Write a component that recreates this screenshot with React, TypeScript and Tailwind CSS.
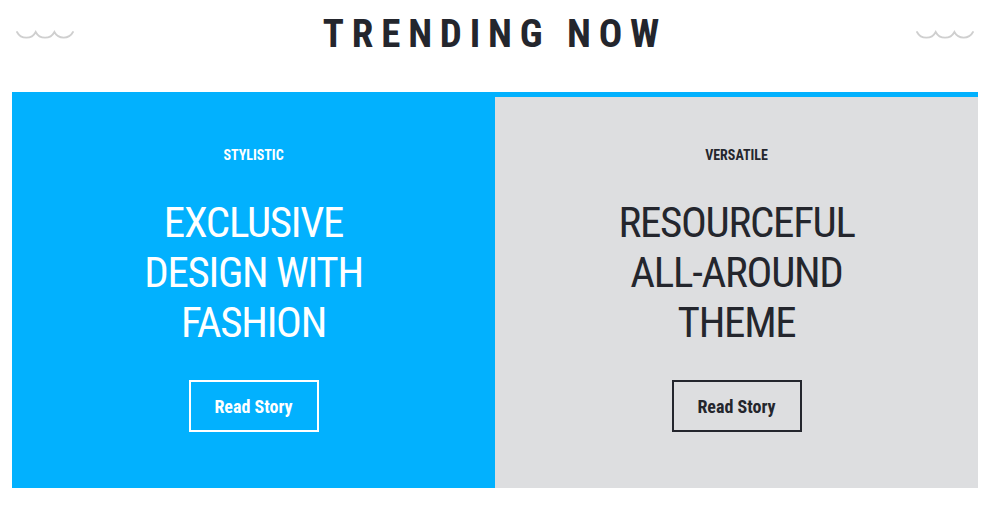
const Waves = () => (
  <svg width="58" height="12" viewBox="0 0 58 12" fill="none" className="shrink-0 mt-[3px]">
    <path
      d="M1 2 A10.5 10.5 0 0 0 19.7 2 A10.5 10.5 0 0 0 38.4 2 A10.5 10.5 0 0 0 57 2"
      stroke="#cfcfcf"
      strokeWidth="1.8"
      strokeLinecap="round"
    />
  </svg>
);

type Card = {
  label: string;
  lines: string[];
  dark: boolean;
};

const CARDS: Card[] = [
  { label: 'STYLISTIC', lines: ['EXCLUSIVE', 'DESIGN WITH', 'FASHION'], dark: false },
  { label: 'VERSATILE', lines: ['RESOURCEFUL', 'ALL-AROUND', 'THEME'], dark: true },
];

export default function App() {
  return (
    <div className="w-[993px] h-[514px] bg-white font-['Roboto_Condensed',Roboto,sans-serif]">
      <div className="flex items-center justify-between h-[68px] pl-4 pr-[19px]">
        <Waves />
        <h1 className="text-[39px] leading-none font-bold tracking-[0.2em] text-[#24262d]">
          TRENDING NOW
        </h1>
        <Waves />
      </div>

      <div className="ml-3 mt-6 w-[966px] bg-[#02b1fe] pt-[5px] grid grid-cols-2">
        {CARDS.map((c) => (
          <div
            key={c.label}
            className={`flex flex-col items-center pt-12 pb-14 ${
              c.dark ? 'bg-[#dddee0] text-[#24262d]' : 'text-white'
            }`}
          >
            <div className="text-[14px] leading-5 font-bold">{c.label}</div>
            <h2 className="mt-8 text-[43px] leading-[50px] font-normal tracking-[-0.03em] text-center">
              {c.lines.map((l) => (
                <div key={l}>{l}</div>
              ))}
            </h2>
            <button
              className={`mt-[33px] w-[130px] h-[52px] border-2 text-[18px] font-bold ${
                c.dark ? 'border-[#24262d]' : 'border-white'
              }`}
            >
              Read Story
            </button>
          </div>
        ))}
      </div>
    </div>
  );
}
